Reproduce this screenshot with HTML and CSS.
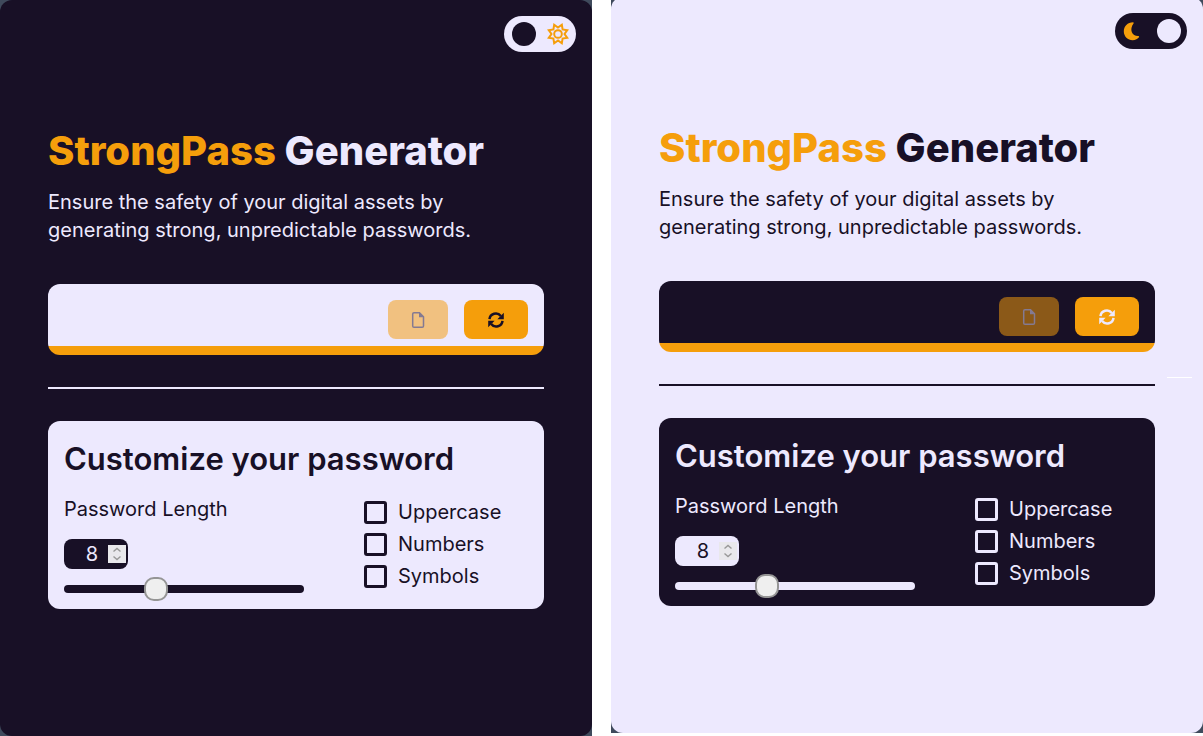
FILE: index.html
```html
<!DOCTYPE html>
<html lang="en">
<head>
<meta charset="utf-8">
<meta name="viewport" content="width=device-width, initial-scale=1">
<title>StrongPass Generator</title>
<link rel="stylesheet" href="styles.css">
</head>
<body>
<svg class="sprite" aria-hidden="true">
  <symbol id="file" viewBox="0 0 16 20"><path d="M4 2.700h5.500l4 4V16q0 1.300-1.300 1.300H4q-1.300 0-1.300-1.300V4q0-1.300 1.300-1.300z" fill="none" stroke="currentColor" stroke-width="1.500"/><path d="M9 2v5.200h5z" fill="currentColor"/></symbol>
  <symbol id="refresh" viewBox="0 0 16 16"><path d="M1.500 7.200A6.300 6.300 0 0 1 12.800 4M14.500 8.800A6.300 6.300 0 0 1 3.200 12" fill="none" stroke="currentColor" stroke-width="2.500"/><path d="M15.800.8v6.400H9.400zM.2 15.200V8.800h6.400z" fill="currentColor"/></symbol>
</svg>
<div class="screens">
  <div class="backdrop">
    <section class="screen dark">
      <header class="topbar">
        <button class="toggle" type="button" aria-label="Switch to light theme">
          <span class="knob"></span>
          <svg class="sun" viewBox="0 0 22 22" aria-hidden="true"><path d="M11 1.800 13.300 5.500 17.500 4.500 16.500 8.700 20.200 11 16.500 13.300 17.500 17.500 13.300 16.500 11 20.200 8.700 16.500 4.500 17.500 5.500 13.300 1.800 11 5.500 8.700 4.500 4.500 8.700 5.500z" transform="rotate(22.500 11 11)"/><circle cx="11" cy="11" r="3.500"/></svg>
        </button>
      </header>
      <main class="content">
        <h1 class="title"><span class="brand">StrongPass</span> Generator</h1>
        <p class="intro">Ensure the safety of your digital assets by generating strong, unpredictable passwords.</p>
        <div class="output">
          <button class="btn copy" type="button" aria-label="Copy password" disabled><svg class="file-icon"><use href="#file"/></svg></button>
          <button class="btn renew" type="button" aria-label="Generate password"><svg class="renew-icon"><use href="#refresh"/></svg></button>
        </div>
        <hr class="rule">
        <form class="options">
          <h2 class="heading">Customize your password</h2>
          <div class="columns">
            <div class="length">
              <label for="length-dark">Password Length</label>
              <input class="number" id="length-dark" type="number" value="8" min="1" max="20">
              <input class="slider" type="range" value="8" min="1" max="20" aria-label="Password length slider">
            </div>
            <div class="checks">
              <label class="check"><input class="box" type="checkbox">Uppercase</label>
              <label class="check"><input class="box" type="checkbox">Numbers</label>
              <label class="check"><input class="box" type="checkbox">Symbols</label>
            </div>
          </div>
        </form>
      </main>
    </section>
  </div>
  <div class="backdrop raised">
    <section class="screen light">
      <header class="topbar">
        <button class="toggle" type="button" aria-label="Switch to dark theme">
          <svg class="moon" viewBox="0 0 17 20" aria-hidden="true"><path d="M10.200 1.200C4.500 1.200.8 5.200.8 10.200c0 5.200 4 9 8.800 9 2.800 0 5.200-1.200 6.600-3.200l-.5-1C9.500 15.500 5.500 9 10.800 2z"/></svg>
          <span class="knob"></span>
        </button>
      </header>
      <main class="content">
        <h1 class="title"><span class="brand">StrongPass</span> Generator</h1>
        <p class="intro">Ensure the safety of your digital assets by generating strong, unpredictable passwords.</p>
        <div class="output">
          <button class="btn copy" type="button" aria-label="Copy password" disabled><svg class="file-icon"><use href="#file"/></svg></button>
          <button class="btn renew" type="button" aria-label="Generate password"><svg class="renew-icon"><use href="#refresh"/></svg></button>
        </div>
        <hr class="rule">
        <form class="options">
          <h2 class="heading">Customize your password</h2>
          <div class="columns">
            <div class="length">
              <label for="length-light">Password Length</label>
              <input class="number" id="length-light" type="number" value="8" min="1" max="20">
              <input class="slider" type="range" value="8" min="1" max="20" aria-label="Password length slider">
            </div>
            <div class="checks">
              <label class="check"><input class="box" type="checkbox">Uppercase</label>
              <label class="check"><input class="box" type="checkbox">Numbers</label>
              <label class="check"><input class="box" type="checkbox">Symbols</label>
            </div>
          </div>
        </form>
      </main>
      <span class="dash"></span>
    </section>
  </div>
</div>
</body>
</html>
```
FILE: styles.css
```css
* { box-sizing: border-box; }

body {
  margin: 0;
  background: #fff;
  font-family: Inter, "Liberation Sans", sans-serif;
  font-size: 20px;
  line-height: 28px;
}

.sprite { position: absolute; width: 0; height: 0; }

.screens {
  display: grid;
  grid-template-columns: 1fr 1fr;
  gap: 19px;
  height: 100vh;
  overflow: hidden;
}

.backdrop { height: 100vh; background: #3f4a5c; }
.raised { margin-top: -3px; }

.screen {
  position: relative;
  height: 100%;
  padding: 16px;
  border-radius: 12px;
  background: var(--back);
  color: var(--front);
}

.dark { --back: #181026; --front: #ede9fe; }
.light { --back: #ede9fe; --front: #181026; }

.topbar { display: flex; justify-content: flex-end; }

.toggle {
  display: flex;
  align-items: center;
  justify-content: space-between;
  width: 72px;
  height: 36px;
  padding: 0 6px 0 8px;
  border: 0;
  border-radius: 18px;
  background: var(--front);
}

.knob { width: 24px; height: 24px; border-radius: 50%; background: var(--back); }
.sun { width: 24px; height: 24px; fill: none; stroke: #f59e0b; stroke-width: 1.800; }
.moon { width: 17px; height: 20px; fill: #f59e0b; }

.content { padding: 75px 32px 0; }

.title {
  margin: 0 0 13px;
  font-size: 40px;
  font-weight: 800;
  line-height: 48px;
  white-space: nowrap;
}

.brand { color: #f59e0b; }
.intro { margin: 0 0 40px; }

.output {
  display: flex;
  justify-content: flex-end;
  gap: 16px;
  padding: 16px;
  border-radius: 12px;
  background: linear-gradient(to top, #f59e0b 9px, var(--front) 9px);
}

.btn {
  display: flex;
  align-items: center;
  justify-content: center;
  height: 39px;
  padding: 0;
  border: 0;
  border-radius: 8px;
  background: #f59e0b;
}

.copy { width: 60px; background: rgb(245 158 11 / 52%); color: #847a92; }
.renew { width: 64px; color: var(--back); }
.file-icon { width: 16px; height: 20px; }
.renew-icon { width: 16px; height: 16px; }

.rule { height: 2px; margin: 32px 0; border: 0; background: var(--front); }

.options {
  padding: 18px 16px 16px;
  border-radius: 12px;
  background: var(--front);
  color: var(--back);
}

.heading { margin: 0 0 16px; font-size: 31px; font-weight: 600; line-height: 40px; white-space: nowrap; }
.columns { display: flex; gap: 60px; }
.length { display: flex; flex-direction: column; width: 240px; }

.number {
  appearance: none;
  width: 64px;
  height: 30px;
  margin: 16px 0;
  padding: 0 2px 0 12px;
  border: 0;
  border-radius: 8px;
  background: var(--back);
  color: var(--front);
  font: inherit;
  line-height: 24px;
  text-align: center;
}

.number::-webkit-inner-spin-button {
  appearance: none;
  align-self: center;
  width: 18px;
  height: 18px;
  margin: 0;
  opacity: 1;
  background: #e9e8ec url("data:image/svg+xml,%3Csvg xmlns='http://www.w3.org/2000/svg' viewBox='0 0 18 18'%3E%3Cpath d='M5.500 6.500 9 3.500l3.500 3M5.500 11.500l3.500 3 3.500-3' fill='none' stroke='%23999' stroke-width='1.400'/%3E%3C/svg%3E");
}

.slider {
  appearance: none;
  width: 240px;
  height: 8px;
  margin: 0;
  border-radius: 4px;
  background: var(--back);
}

.slider::-webkit-slider-thumb {
  appearance: none;
  width: 24px;
  height: 24px;
  border: 2px solid #959595;
  border-radius: 10px;
  background: #efefef;
}

.checks { display: flex; flex-direction: column; gap: 4px; padding-top: 3px; }
.check { display: flex; align-items: center; gap: 11px; }

.box {
  appearance: none;
  width: 23px;
  height: 23px;
  margin: 0;
  border: 3px solid var(--back);
  border-radius: 3px;
}

.dash {
  position: absolute;
  right: 11px;
  top: 380px;
  width: 25px;
  height: 1px;
  background: #fff;
}
```
